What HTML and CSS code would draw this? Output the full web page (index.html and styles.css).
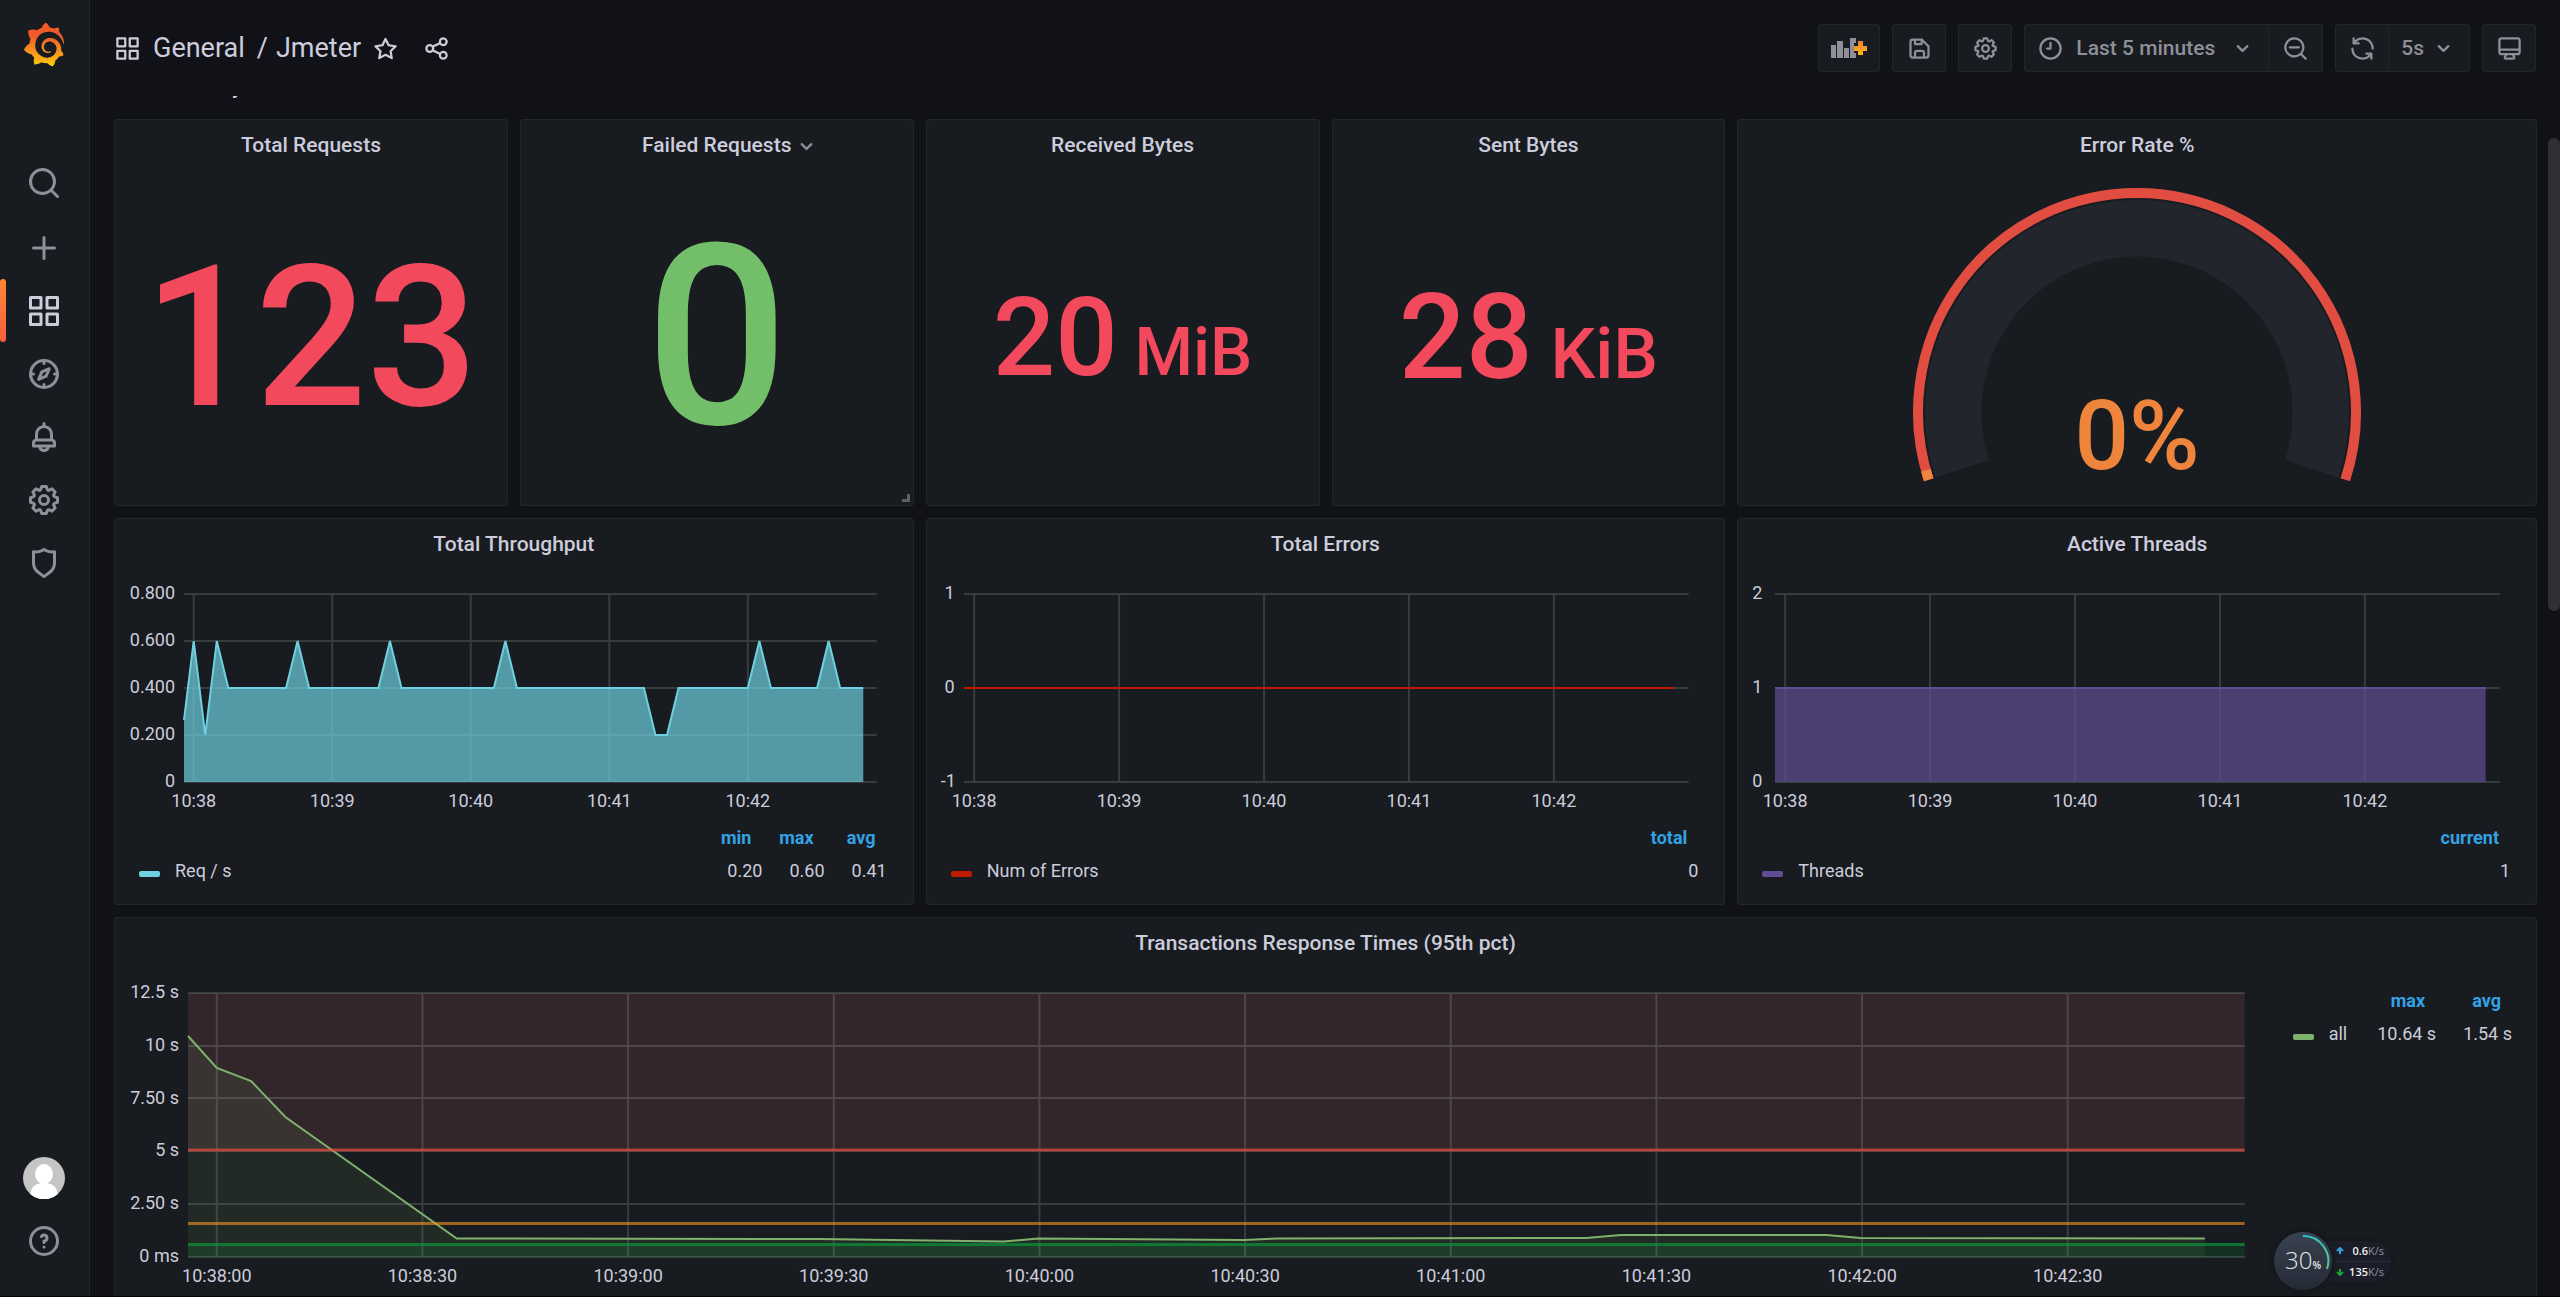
FILE: index.html
```html
<!DOCTYPE html>
<html lang="en">
<head>
<meta charset="utf-8">
<title>Jmeter - Grafana</title>
<link rel="stylesheet" href="styles.css">
</head>
<body>
<svg class="sprite" aria-hidden="true">
  <symbol id="i-search" viewBox="0 0 24 24"><path d="M21.71,20.29,18,16.61A9,9,0,1,0,16.61,18l3.68,3.68a1,1,0,0,0,1.42,0A1,1,0,0,0,21.71,20.29ZM11,18a7,7,0,1,1,7-7A7,7,0,0,1,11,18Z"/></symbol>
  <symbol id="i-plus" viewBox="0 0 24 24"><path d="M19,11H13V5a1,1,0,0,0-2,0v6H5a1,1,0,0,0,0,2h6v6a1,1,0,0,0,2,0V13h6a1,1,0,0,0,0-2Z"/></symbol>
  <symbol id="i-apps" viewBox="0 0 24 24"><path d="M10,13H3a1,1,0,0,0-1,1v7a1,1,0,0,0,1,1h7a1,1,0,0,0,1-1V14A1,1,0,0,0,10,13ZM9,20H4V15H9ZM21,2H14a1,1,0,0,0-1,1v7a1,1,0,0,0,1,1h7a1,1,0,0,0,1-1V3A1,1,0,0,0,21,2ZM20,9H15V4h5Zm1,4H14a1,1,0,0,0-1,1v7a1,1,0,0,0,1,1h7a1,1,0,0,0,1-1V14A1,1,0,0,0,21,13Zm-1,7H15V15h5ZM10,2H3A1,1,0,0,0,2,3v7a1,1,0,0,0,1,1h7a1,1,0,0,0,1-1V3A1,1,0,0,0,10,2ZM9,9H4V4H9Z"/></symbol>
  <symbol id="i-compass" viewBox="0 0 24 24"><path d="M12,2A10,10,0,1,0,22,12,10,10,0,0,0,12,2Zm1,17.93V19a1,1,0,0,0-2,0v.93A8,8,0,0,1,4.07,13H5a1,1,0,0,0,0-2H4.07A8,8,0,0,1,11,4.07V5a1,1,0,0,0,2,0V4.07A8,8,0,0,1,19.93,11H19a1,1,0,0,0,0,2h.93A8,8,0,0,1,13,19.93ZM15.14,7.55l-5,2.12a1,1,0,0,0-.52.52l-2.12,5a1,1,0,0,0,.21,1.1,1,1,0,0,0,.7.3.93.93,0,0,0,.4-.09l5-2.12a1,1,0,0,0,.52-.52l2.12-5a1,1,0,0,0-1.31-1.31Zm-2.49,5.1-2.28,1,1-2.28,2.28-1Z"/></symbol>
  <symbol id="i-bell" viewBox="0 0 24 24"><path d="M18,13.18V10a6,6,0,0,0-5-5.91V3a1,1,0,0,0-2,0V4.09A6,6,0,0,0,6,10v3.18A3,3,0,0,0,4,16v2a1,1,0,0,0,1,1H8.14a4,4,0,0,0,7.72,0H19a1,1,0,0,0,1-1V16A3,3,0,0,0,18,13.18ZM8,10a4,4,0,0,1,8,0v3H8Zm4,10a2,2,0,0,1-1.72-1h3.44A2,2,0,0,1,12,20Zm6-3H6V16a1,1,0,0,1,1-1H17a1,1,0,0,1,1,1Z"/></symbol>
  <symbol id="i-cog" viewBox="0 0 24 24"><path d="M21.32,9.55l-1.89-.63.89-1.78A1,1,0,0,0,20.13,6L18,3.87a1,1,0,0,0-1.15-.19l-1.78.89-.63-1.89A1,1,0,0,0,13.5,2h-3a1,1,0,0,0-.95.68L8.92,4.57,7.14,3.68A1,1,0,0,0,6,3.87L3.87,6a1,1,0,0,0-.19,1.15l.89,1.78-1.89.63A1,1,0,0,0,2,10.5v3a1,1,0,0,0,.68.95l1.89.63-.89,1.78A1,1,0,0,0,3.87,18L6,20.13a1,1,0,0,0,1.15.19l1.78-.89.63,1.89a1,1,0,0,0,.95.68h3a1,1,0,0,0,.95-.68l.63-1.89,1.78.89A1,1,0,0,0,18,20.13L20.13,18a1,1,0,0,0,.19-1.15l-.89-1.78,1.89-.63A1,1,0,0,0,22,13.5v-3A1,1,0,0,0,21.32,9.55ZM20,12.78l-1.2.4A2,2,0,0,0,17.64,16l.57,1.14-1.1,1.1L16,17.64a2,2,0,0,0-2.79,1.16l-.4,1.2H11.22l-.4-1.2A2,2,0,0,0,8,17.64l-1.14.57-1.1-1.1L6.36,16A2,2,0,0,0,5.2,13.18L4,12.78V11.22l1.2-.4A2,2,0,0,0,6.36,8L5.79,6.89l1.1-1.1L8,6.36A2,2,0,0,0,10.82,5.2l.4-1.2h1.56l.4,1.2A2,2,0,0,0,16,6.36l1.14-.57,1.1,1.1L17.64,8a2,2,0,0,0,1.16,2.79l1.2.4ZM12,8a4,4,0,1,0,4,4A4,4,0,0,0,12,8Zm0,6a2,2,0,1,1,2-2A2,2,0,0,1,12,14Z"/></symbol>
  <symbol id="i-shield" viewBox="0 0 24 24"><path d="M19.63,3.65a1,1,0,0,0-.84-.2,8,8,0,0,1-6.22-1.27,1,1,0,0,0-1.14,0A8,8,0,0,1,5.21,3.45a1,1,0,0,0-.84.2A1,1,0,0,0,4,4.43v7.45a9,9,0,0,0,3.77,7.33l3.65,2.6a1,1,0,0,0,1.16,0l3.65-2.6A9,9,0,0,0,20,11.88V4.43A1,1,0,0,0,19.63,3.65ZM18,11.88a7,7,0,0,1-2.93,5.7L12,19.77,8.93,17.58A7,7,0,0,1,6,11.88V5.58a10,10,0,0,0,6-1.39,10,10,0,0,0,6,1.39Z"/></symbol>
  <symbol id="i-help" viewBox="0 0 24 24"><path d="M11.29,15.29a1.58,1.58,0,0,0-.12.15.76.76,0,0,0-.09.18.64.64,0,0,0-.06.18,1.36,1.36,0,0,0,0,.2.84.84,0,0,0,.08.38.9.9,0,0,0,.54.54.94.94,0,0,0,.76,0,.9.9,0,0,0,.54-.54A1,1,0,0,0,13,16a1,1,0,0,0-.29-.71A1,1,0,0,0,11.29,15.29ZM12,2A10,10,0,1,0,22,12,10,10,0,0,0,12,2Zm0,18a8,8,0,1,1,8-8A8,8,0,0,1,12,20ZM12,7A3,3,0,0,0,9.4,8.5a1,1,0,1,0,1.73,1A1,1,0,0,1,12,9a1,1,0,0,1,0,2,1,1,0,0,0-1,1v1a1,1,0,0,0,2,0v-.18A3,3,0,0,0,12,7Z"/></symbol>
  <symbol id="i-star" viewBox="0 0 24 24"><path d="M22,9.67A1,1,0,0,0,21.14,9l-5.69-.83L12.9,3a1,1,0,0,0-1.8,0L8.55,8.16,2.86,9a1,1,0,0,0-.81.68,1,1,0,0,0,.25,1l4.13,4-1,5.68A1,1,0,0,0,6.9,21.44L12,18.77l5.1,2.67a.93.93,0,0,0,.46.12,1,1,0,0,0,.59-.19,1,1,0,0,0,.4-1l-1-5.68,4.13-4A1,1,0,0,0,22,9.67Zm-6.15,4a1,1,0,0,0-.29.88l.72,4.2-3.76-2a1.06,1.06,0,0,0-.94,0l-3.76,2,.72-4.2a1,1,0,0,0-.29-.88l-3-3,4.21-.61a1,1,0,0,0,.76-.55L12,5.7l1.88,3.82a1,1,0,0,0,.76.55l4.21.61Z"/></symbol>
  <symbol id="i-share" viewBox="0 0 24 24"><path d="M18,14a4,4,0,0,0-3.08,1.48l-5.1-2.35a3.64,3.64,0,0,0,0-2.26l5.1-2.35A4,4,0,1,0,14,6a4.17,4.17,0,0,0,.07.71L8.79,9.14a4,4,0,1,0,0,5.72l5.28,2.43A4.17,4.17,0,0,0,14,18a4,4,0,1,0,4-4ZM18,4a2,2,0,1,1-2,2A2,2,0,0,1,18,4ZM6,14a2,2,0,1,1,2-2A2,2,0,0,1,6,14Zm12,6a2,2,0,1,1,2-2A2,2,0,0,1,18,20Z"/></symbol>
  <symbol id="i-save" viewBox="0 0 24 24"><path d="M20.71,9.29l-6-6a1,1,0,0,0-.32-.21A1.09,1.09,0,0,0,14,3H6A3,3,0,0,0,3,6V18a3,3,0,0,0,3,3H18a3,3,0,0,0,3-3V10A1,1,0,0,0,20.71,9.29ZM9,5h4V7H9Zm6,14H9V16a1,1,0,0,1,1-1h4a1,1,0,0,1,1,1Zm4-1a1,1,0,0,1-1,1H17V16a3,3,0,0,0-3-3H10a3,3,0,0,0-3,3v3H6a1,1,0,0,1-1-1V6A1,1,0,0,1,6,5H7V8A1,1,0,0,0,8,9h6a1,1,0,0,0,1-1V6.41l4,4Z"/></symbol>
  <symbol id="i-clock" viewBox="0 0 24 24"><path d="M12,2A10,10,0,1,0,22,12,10,10,0,0,0,12,2Zm0,18a8,8,0,1,1,8-8A8,8,0,0,1,12,20ZM12,6a1,1,0,0,0-1,1v4H9a1,1,0,0,0,0,2h3a1,1,0,0,0,1-1V7A1,1,0,0,0,12,6Z"/></symbol>
  <symbol id="i-angle" viewBox="0 0 24 24"><path d="M17,9.17a1,1,0,0,0-1.41,0L12,12.71,8.46,9.17a1,1,0,0,0-1.41,0,1,1,0,0,0,0,1.42l4.24,4.24a1,1,0,0,0,1.42,0L17,10.59A1,1,0,0,0,17,9.17Z"/></symbol>
  <symbol id="i-zoom-out" viewBox="0 0 24 24"><path d="M21.71,20.29,18,16.61A9,9,0,1,0,16.61,18l3.68,3.68a1,1,0,0,0,1.42,0A1,1,0,0,0,21.71,20.29ZM11,18a7,7,0,1,1,7-7A7,7,0,0,1,11,18Zm4-8H7a1,1,0,0,0,0,2h8a1,1,0,0,0,0-2Z"/></symbol>
  <symbol id="i-sync" viewBox="0 0 24 24"><path d="M19.91,15.51H15.38a1,1,0,0,0,0,2h2.4A8,8,0,0,1,4,12a1,1,0,0,0-2,0,10,10,0,0,0,16.88,7.23V21a1,1,0,0,0,2,0V16.5A1,1,0,0,0,19.91,15.51ZM12,2A10,10,0,0,0,5.12,4.77V3a1,1,0,0,0-2,0V7.5a1,1,0,0,0,1,1h4.5a1,1,0,0,0,0-2H6.22A8,8,0,0,1,20,12a1,1,0,0,0,2,0A10,10,0,0,0,12,2Z"/></symbol>
  <symbol id="i-monitor" viewBox="0 0 24 24"><path d="M19,2H5A3,3,0,0,0,2,5V15a3,3,0,0,0,3,3H7.64l-.58,1a2,2,0,0,0,0,2,2,2,0,0,0,1.75,1h6.46A2,2,0,0,0,17,21a2,2,0,0,0,0-2l-.59-1H19a3,3,0,0,0,3-3V5A3,3,0,0,0,19,2ZM8.77,20,10,18H14l1.2,2ZM20,15a1,1,0,0,1-1,1H5a1,1,0,0,1-1-1V14H20Zm0-3H4V5A1,1,0,0,1,5,4H19a1,1,0,0,1,1,1Z"/></symbol>
  <symbol id="i-grafana" viewBox="0 0 351 365"><path fill="url(#brand)" d="M342,161.2c-0.6-6.1-1.6-13.1-3.6-20.9c-2-7.7-5-16.2-9.4-25c-4.4-8.8-10.1-17.9-17.5-26.8c-2.9-3.5-6.1-6.9-9.5-10.2c5.1-20.3-6.2-37.9-6.2-37.9c-19.5-1.2-31.9,6.1-36.5,9.4c-0.8-0.3-1.5-0.7-2.3-1c-3.3-1.3-6.7-2.6-10.3-3.7c-3.5-1.1-7.1-2.1-10.8-3c-3.7-0.9-7.4-1.6-11.2-2.2c-0.7-0.1-1.3-0.2-2-0.3c-8.5-27.2-32.9-38.6-32.9-38.6c-27.3,17.3-32.4,41.5-32.4,41.5s-0.1,0.5-0.3,1.4c-1.5,0.4-3,0.9-4.5,1.3c-2.1,0.6-4.2,1.4-6.2,2.2c-2.1,0.8-4.1,1.6-6.2,2.5c-4.1,1.8-8.2,3.8-12.2,6c-3.9,2.2-7.7,4.6-11.4,7.1c-0.5-0.2-1-0.4-1-0.4c-37.8-14.4-71.3,2.9-71.3,2.9c-3.1,40.2,15.1,65.5,18.7,70.1c-0.9,2.5-1.7,5-2.5,7.5c-2.8,9.1-4.9,18.4-6.2,28.1c-0.2,1.4-0.4,2.8-0.5,4.2C18.8,192.7,8.5,228,8.5,228c29.1,33.5,63.1,35.6,63.1,35.6c0,0,0.1-0.1,0.1-0.1c4.3,7.7,9.3,15,14.9,21.9c2.4,2.9,4.8,5.6,7.4,8.3c-10.6,30.4,1.5,55.6,1.5,55.6c32.4,1.2,53.7-14.2,58.2-17.7c3.2,1.1,6.5,2.1,9.8,2.9c10,2.6,20.2,4.1,30.4,4.5c2.5,0.1,5.1,0.2,7.6,0.1l1.2,0l0.8,0l1.6,0l1.6-0.1l0,0.1c15.3,21.8,42.1,24.9,42.1,24.9c19.1-20.1,20.2-40.1,20.2-44.4l0,0c0,0,0-0.1,0-0.3c0-0.4,0-0.6,0-0.6l0,0c0-0.3,0-0.6,0-0.9c4-2.8,7.8-5.8,11.4-9.1c7.6-6.9,14.3-14.8,19.9-23.3c0.5-0.8,1-1.6,1.5-2.4c21.6,1.2,36.9-13.4,36.9-13.4c-3.6-22.5-16.4-33.5-19.1-35.6l0,0c0,0-0.1-0.1-0.3-0.2c-0.2-0.1-0.2-0.2-0.2-0.2c0,0,0,0,0,0c-0.1-0.1-0.3-0.2-0.5-0.3c0.1-1.4,0.2-2.7,0.3-4.1c0.2-2.4,0.2-4.9,0.2-7.3l0-1.8l0-0.9l0-0.5c0-0.6,0-0.4,0-0.6l-0.1-1.5l-0.1-2c0-0.7-0.1-1.3-0.2-1.9c-0.1-0.6-0.1-1.3-0.2-1.9l-0.2-1.9l-0.3-1.9c-0.4-2.5-0.8-4.9-1.4-7.4c-2.3-9.7-6.1-18.9-11-27.2c-5-8.3-11.2-15.6-18.3-21.8c-7-6.2-14.9-11.2-23.1-14.9c-8.3-3.7-16.9-6.1-25.5-7.2c-4.3-0.6-8.6-0.8-12.9-0.7l-1.6,0l-0.4,0c-0.1,0-0.6,0-0.5,0l-0.7,0l-1.6,0.1c-0.6,0-1.2,0.1-1.7,0.1c-2.2,0.2-4.4,0.5-6.5,0.9c-8.6,1.6-16.7,4.7-23.8,9c-7.1,4.3-13.3,9.6-18.3,15.6c-5,6-8.9,12.7-11.6,19.6c-2.7,6.9-4.2,14.1-4.6,21c-0.1,1.7-0.1,3.5-0.1,5.2c0,0.4,0,0.9,0,1.3l0.1,1.4c0.1,0.8,0.1,1.7,0.2,2.5c0.3,3.5,1,6.9,1.9,10.1c1.9,6.5,4.9,12.4,8.6,17.4c3.7,5,8.2,9.1,12.9,12.4c4.7,3.2,9.8,5.5,14.8,7c5,1.5,10,2.1,14.7,2.1c0.6,0,1.2,0,1.7,0c0.3,0,0.6,0,0.9,0c0.3,0,0.6,0,0.9-0.1c0.5,0,1-0.1,1.5-0.1c0.1,0,0.3,0,0.4-0.1l0.5-0.1c0.3,0,0.6-0.1,0.9-0.1c0.6-0.1,1.1-0.2,1.7-0.3c0.6-0.1,1.1-0.2,1.6-0.4c1.1-0.2,2.1-0.6,3.1-0.9c2-0.7,4-1.5,5.7-2.4c1.8-0.9,3.4-2,5-3c0.4-0.3,0.9-0.6,1.3-1c1.6-1.3,1.9-3.7,0.6-5.3c-1.1-1.4-3.1-1.8-4.7-0.9c-0.4,0.2-0.8,0.4-1.2,0.6c-1.4,0.7-2.8,1.3-4.3,1.8c-1.5,0.5-3.1,0.9-4.7,1.2c-0.8,0.1-1.6,0.2-2.5,0.3c-0.4,0-0.8,0.1-1.3,0.1c-0.4,0-0.9,0-1.2,0c-0.4,0-0.8,0-1.2,0c-0.5,0-1,0-1.5-0.1c0,0-0.3,0-0.1,0l-0.2,0l-0.3,0c-0.2,0-0.5,0-0.7-0.1c-0.5-0.1-0.9-0.1-1.4-0.2c-3.7-0.5-7.4-1.6-10.9-3.2c-3.6-1.6-7-3.8-10.1-6.6c-3.1-2.8-5.8-6.1-7.9-9.9c-2.1-3.8-3.6-8-4.3-12.4c-0.3-2.2-0.5-4.5-0.4-6.7c0-0.6,0.1-1.2,0.1-1.8c0,0.2,0-0.1,0-0.1l0-0.2l0-0.5c0-0.3,0.1-0.6,0.1-0.9c0.1-1.2,0.3-2.4,0.5-3.6c1.7-9.6,6.5-19,13.9-26.1c1.9-1.8,3.9-3.4,6-4.9c2.1-1.5,4.4-2.8,6.8-3.9c2.4-1.1,4.8-2,7.4-2.7c2.5-0.7,5.1-1.1,7.8-1.4c1.3-0.1,2.6-0.2,4-0.2c0.4,0,0.6,0,0.9,0l1.1,0l0.7,0c0.3,0,0,0,0.1,0l0.3,0l1.1,0.1c2.9,0.2,5.7,0.6,8.5,1.3c5.6,1.2,11.1,3.3,16.2,6.1c10.2,5.7,18.9,14.5,24.2,25.1c2.7,5.3,4.6,11,5.5,16.9c0.2,1.5,0.4,3,0.5,4.5l0.1,1.1l0.1,1.1c0,0.4,0,0.8,0,1.1c0,0.4,0,0.8,0,1.1l0,1l0,1.1c0,0.7-0.1,1.9-0.1,2.6c-0.1,1.6-0.3,3.3-0.5,4.9c-0.2,1.6-0.5,3.2-0.8,4.8c-0.3,1.6-0.7,3.2-1.1,4.7c-0.8,3.1-1.8,6.2-3,9.3c-2.4,6-5.6,11.8-9.4,17.1c-7.7,10.6-18.2,19.2-30.2,24.7c-6,2.7-12.3,4.7-18.8,5.7c-3.2,0.6-6.5,0.9-9.8,1l-0.6,0l-0.5,0l-1.1,0l-1.6,0l-0.8,0c0.4,0-0.1,0-0.1,0l-0.3,0c-1.8,0-3.5-0.1-5.3-0.3c-7-0.5-13.9-1.8-20.7-3.7c-6.7-1.9-13.2-4.6-19.4-7.8c-12.3-6.6-23.4-15.6-32-26.5c-4.3-5.4-8.1-11.3-11.2-17.4c-3.1-6.1-5.6-12.6-7.4-19.1c-1.8-6.6-2.9-13.3-3.4-20.1l-0.1-1.3l0-0.3l0-0.3l0-0.6l0-1.1l0-0.3l0-0.4l0-0.8l0-1.6l0-0.3c0,0,0,0.1,0-0.1l0-0.6c0-0.8,0-1.7,0-2.5c0.1-3.3,0.4-6.8,0.8-10.2c0.4-3.4,1-6.9,1.7-10.3c0.7-3.4,1.5-6.8,2.5-10.2c1.9-6.7,4.3-13.2,7.1-19.3c5.7-12.2,13.1-23.1,22-31.8c2.2-2.2,4.5-4.2,6.9-6.2c2.4-1.9,4.9-3.7,7.5-5.4c2.5-1.7,5.2-3.2,7.9-4.6c1.3-0.7,2.7-1.4,4.1-2c0.7-0.3,1.4-0.6,2.1-0.9c0.7-0.3,1.4-0.6,2.1-0.9c2.8-1.2,5.7-2.2,8.7-3.1c0.7-0.2,1.5-0.4,2.2-0.7c0.7-0.2,1.5-0.4,2.2-0.6c1.5-0.4,3-0.8,4.5-1.1c0.7-0.2,1.5-0.3,2.3-0.5c0.8-0.2,1.5-0.3,2.3-0.5c0.8-0.1,1.5-0.3,2.3-0.4l1.1-0.2l1.2-0.2c0.8-0.1,1.5-0.2,2.3-0.3c0.9-0.1,1.7-0.2,2.6-0.3c0.7-0.1,1.9-0.2,2.6-0.3c0.5-0.1,1.1-0.1,1.6-0.2l1.1-0.1l0.5-0.1l0.6,0c0.9-0.1,1.7-0.1,2.6-0.2l1.3-0.1c0,0,0.5,0,0.1,0l0.3,0l0.6,0c0.7,0,1.5-0.1,2.2-0.1c2.9-0.1,5.9-0.1,8.8,0c5.8,0.2,11.5,0.9,17,1.9c11.1,2.1,21.5,5.6,31,10.3c9.5,4.6,17.9,10.3,25.3,16.5c0.5,0.4,0.9,0.8,1.4,1.2c0.4,0.4,0.9,0.8,1.3,1.2c0.9,0.8,1.7,1.6,2.6,2.4c0.9,0.8,1.7,1.6,2.5,2.4c0.8,0.8,1.6,1.6,2.4,2.5c3.1,3.3,6,6.6,8.6,10c5.2,6.7,9.4,13.5,12.7,19.9c0.2,0.4,0.4,0.8,0.6,1.2c0.2,0.4,0.4,0.8,0.6,1.2c0.4,0.8,0.8,1.6,1.1,2.4c0.4,0.8,0.7,1.5,1.1,2.3c0.3,0.8,0.7,1.5,1,2.3c1.2,3,2.4,5.9,3.3,8.6c1.5,4.4,2.6,8.3,3.5,11.7c0.3,1.4,1.6,2.3,3,2.1c1.5-0.1,2.6-1.3,2.6-2.8C342.6,170.4,342.5,166.1,342,161.2z"/></symbol>
  <defs>
    <linearGradient id="brand" x1="0" y1="1" x2="0" y2="0"><stop offset="0" stop-color="#fcd20a"/><stop offset=".15" stop-color="#fbb117"/><stop offset=".7" stop-color="#f05a28"/><stop offset="1" stop-color="#f05a28"/></linearGradient>
    <linearGradient id="add" x1="0" y1="0" x2="0" y2="1"><stop offset="0" stop-color="#ef7f3a"/><stop offset="1" stop-color="#fbb80f"/></linearGradient>
    <linearGradient id="usage" x1="0" y1="0" x2="0" y2="1"><stop offset="0" stop-color="#2fc8c0"/><stop offset="1" stop-color="#62c283"/></linearGradient>
  </defs>
</svg>

<div class="app">
  <nav class="sidebar" aria-label="Main">
    <a class="logo" href="#" aria-label="Home"><svg><use href="#i-grafana"/></svg></a>
    <a class="side-link search" href="#" aria-label="Search"><svg class="icon-lg"><use href="#i-search"/></svg></a>
    <a class="side-link" href="#" aria-label="Create"><svg class="icon-lg"><use href="#i-plus"/></svg></a>
    <a class="side-link active" href="#" aria-label="Dashboards"><svg class="icon-lg"><use href="#i-apps"/></svg></a>
    <a class="side-link" href="#" aria-label="Explore"><svg class="icon-lg"><use href="#i-compass"/></svg></a>
    <a class="side-link" href="#" aria-label="Alerting"><svg class="icon-lg"><use href="#i-bell"/></svg></a>
    <a class="side-link" href="#" aria-label="Configuration"><svg class="icon-lg"><use href="#i-cog"/></svg></a>
    <a class="side-link" href="#" aria-label="Server admin"><svg class="icon-lg"><use href="#i-shield"/></svg></a>
    <div class="side-bottom">
      <a class="side-link" href="#" aria-label="Profile">
        <svg class="avatar" viewBox="0 0 42 42"><circle cx="21" cy="21" r="21" fill="#c5c5c5"/><ellipse cx="21" cy="17" rx="9" ry="10" fill="#fff"/><path d="M7 37C9 28 14 26 21 26s12 2 14 11A21 21 0 0 1 7 37Z" fill="#fff"/></svg>
      </a>
      <a class="side-link" href="#" aria-label="Help"><svg class="icon-lg"><use href="#i-help"/></svg></a>
    </div>
  </nav>

  <div class="page">
    <header class="topbar">
      <div class="crumbs">
        <svg class="icon"><use href="#i-apps"/></svg>
        <h1 class="crumb-text"><a class="folder" href="#">General</a><span>/</span><a href="#">Jmeter</a></h1>
        <button class="icon-btn" aria-label="Mark as favorite"><svg class="icon"><use href="#i-star"/></svg></button>
        <button class="icon-btn" aria-label="Share dashboard"><svg class="icon"><use href="#i-share"/></svg></button>
      </div>
      <div class="tools">
        <button class="tool" aria-label="Add panel">
          <svg class="add-panel" viewBox="0 0 36 20"><path fill="currentColor" d="M0 7h5v13H0zM6 3h6v17H6zM13 10h5v10h-5zM19 0h6v5h-2v10h2v5h-6z"/><path fill="url(#add)" d="M27 3h5v5h4v5h-4v4h-5v-4h-4V8h4z"/></svg>
        </button>
        <button class="tool" aria-label="Save dashboard"><svg class="icon"><use href="#i-save"/></svg></button>
        <button class="tool" aria-label="Dashboard settings"><svg class="icon"><use href="#i-cog"/></svg></button>
        <div class="tool-group">
          <button class="tool range"><svg class="icon"><use href="#i-clock"/></svg><span>Last 5 minutes</span><svg class="icon"><use href="#i-angle"/></svg></button>
          <button class="tool" aria-label="Zoom out"><svg class="icon"><use href="#i-zoom-out"/></svg></button>
        </div>
        <div class="tool-group">
          <button class="tool" aria-label="Refresh"><svg class="icon"><use href="#i-sync"/></svg></button>
          <button class="tool interval"><span>5s</span><svg class="icon"><use href="#i-angle"/></svg></button>
        </div>
        <button class="tool" aria-label="Cycle view mode"><svg class="icon"><use href="#i-monitor"/></svg></button>
      </div>
    </header>

    <main class="scroller">
      <h2 class="row-title"><svg class="icon"><use href="#i-angle"/></svg>Summary</h2>
      <div class="dashboard">
        <section class="panel w4">
          <h3 class="title">Total Requests</h3>
          <p class="stat red stat-123">123</p>
        </section>
        <section class="panel w4">
          <h3 class="title"><span class="menu-title">Failed Requests<svg class="menu-caret"><use href="#i-angle"/></svg></span></h3>
          <p class="stat green stat-0">0</p>
          <span class="resize"></span>
        </section>
        <section class="panel w4">
          <h3 class="title">Received Bytes</h3>
          <p class="stat red stat-20">20<span class="unit">&nbsp;MiB</span></p>
        </section>
        <section class="panel w4">
          <h3 class="title">Sent Bytes</h3>
          <p class="stat red stat-28">28<span class="unit">&nbsp;KiB</span></p>
        </section>
        <section class="panel w8">
          <h3 class="title">Error Rate %</h3>
          <svg class="gauge" viewBox="0 0 448 296">
            <path d="M15.700 291.700A219 219 0 1 1 432.300 291.700" fill="none" stroke="#e24d42" stroke-width="10"/>
            <path d="M15.700 291.700A219 219 0 0 1 12.900 282.200" fill="none" stroke="#ef843c" stroke-width="10"/>
            <path d="M22.400 289.500A212 212 0 1 1 425.600 289.500L371.900 272.100A155.500 155.500 0 1 0 76.100 272.100Z" fill="#22252b"/>
            <text x="224" y="281" text-anchor="middle">0%</text>
          </svg>
        </section>

        <section class="panel w8">
          <h3 class="title">Total Throughput</h3>
          <div class="chart">
            <div class="y-axis"><span>0.800</span><span>0.600</span><span>0.400</span><span>0.200</span><span>0</span></div>
            <svg class="plot">
              <svg width="100%" height="188" viewBox="0 0 300 188" preserveAspectRatio="none">
                <path class="grid" d="M0 0H300M0 47H300M0 94H300M0 141H300M0 188H300M4.200 0V188M64.200 0V188M124.200 0V188M184.200 0V188M244.200 0V188"/>
                <path fill="#6ed0e0" fill-opacity=".7" d="M0 126L4.200 47L9.200 141L14.200 47L19.200 94H44.200L49.200 47L54.200 94H84.200L89.200 47L94.200 94H134.200L139.200 47L144.200 94H199.200L204.200 141H209.200L214.200 94H244.200L249.200 47L254.200 94H274.200L279.200 47L284.200 94H294.200V188H0Z"/>
                <path class="line" stroke="#6ed0e0" d="M0 126L4.200 47L9.200 141L14.200 47L19.200 94H44.200L49.200 47L54.200 94H84.200L89.200 47L94.200 94H134.200L139.200 47L144.200 94H199.200L204.200 141H209.200L214.200 94H244.200L249.200 47L254.200 94H274.200L279.200 47L284.200 94H294.200"/>
              </svg>
              <text x="1.4%" y="213">10:38</text><text x="21.4%" y="213">10:39</text><text x="41.4%" y="213">10:40</text><text x="61.4%" y="213">10:41</text><text x="81.4%" y="213">10:42</text>
            </svg>
          </div>
          <table class="legend">
            <thead><tr><th class="name"></th><th>min</th><th>max</th><th>avg</th></tr></thead>
            <tbody><tr><td class="name"><i class="swatch cyan"></i>Req / s</td><td>0.20</td><td>0.60</td><td>0.41</td></tr></tbody>
          </table>
        </section>
        <section class="panel w8">
          <h3 class="title">Total Errors</h3>
          <div class="chart">
            <div class="y-axis narrow"><span>1</span><span>0</span><span>-1</span></div>
            <svg class="plot">
              <svg width="100%" height="188" viewBox="0 0 300 188" preserveAspectRatio="none">
                <path class="grid" d="M0 0H300M0 94H300M0 188H300M4.200 0V188M64.200 0V188M124.200 0V188M184.200 0V188M244.200 0V188"/>
                <path class="line" stroke="#bf1b00" d="M0 94H294.200"/>
              </svg>
              <text x="1.4%" y="213">10:38</text><text x="21.4%" y="213">10:39</text><text x="41.4%" y="213">10:40</text><text x="61.4%" y="213">10:41</text><text x="81.4%" y="213">10:42</text>
            </svg>
          </div>
          <table class="legend">
            <thead><tr><th class="name"></th><th>total</th></tr></thead>
            <tbody><tr><td class="name"><i class="swatch crimson"></i>Num of Errors</td><td>0</td></tr></tbody>
          </table>
        </section>
        <section class="panel w8">
          <h3 class="title">Active Threads</h3>
          <div class="chart">
            <div class="y-axis narrow start"><span>2</span><span>1</span><span>0</span></div>
            <svg class="plot">
              <svg width="100%" height="188" viewBox="0 0 300 188" preserveAspectRatio="none">
                <path class="grid" d="M0 0H300M0 94H300M0 188H300M4.200 0V188M64.200 0V188M124.200 0V188M184.200 0V188M244.200 0V188"/>
                <path fill="#614d93" fill-opacity=".7" d="M0 94H294.200V188H0Z"/>
                <path class="line" stroke="#614d93" d="M0 94H294.200"/>
              </svg>
              <text x="1.4%" y="213">10:38</text><text x="21.4%" y="213">10:39</text><text x="41.4%" y="213">10:40</text><text x="61.4%" y="213">10:41</text><text x="81.4%" y="213">10:42</text>
            </svg>
          </div>
          <table class="legend">
            <thead><tr><th class="name"></th><th>current</th></tr></thead>
            <tbody><tr><td class="name"><i class="swatch violet"></i>Threads</td><td>1</td></tr></tbody>
          </table>
        </section>

        <section class="panel w24">
          <h3 class="title">Transactions Response Times (95th pct)</h3>
          <div class="wide">
            <div class="chart">
              <div class="y-axis tall"><span>12.5 s</span><span>10 s</span><span>7.50 s</span><span>5 s</span><span>2.50 s</span><span>0 ms</span></div>
              <svg class="plot tall">
                <svg width="100%" height="264" viewBox="0 0 300 264" preserveAspectRatio="none">
                  <path fill="#f07f82" fill-opacity=".12" d="M0 0H300V158H0Z"/>
                  <path fill="#0a9639" fill-opacity=".17" d="M0 252H300V264H0Z"/>
                  <path class="grid" d="M0 0H300M0 53H300M0 105H300M0 158H300M0 211H300M0 264H300M4.200 0V264M34.200 0V264M64.200 0V264M94.200 0V264M124.200 0V264M154.200 0V264M184.200 0V264M214.200 0V264M244.200 0V264M274.200 0V264"/>
                  <path fill="#7eb26d" fill-opacity=".1" d="M0 43L4.200 75L9.200 88L14.200 124L39.200 245.500L92 246L119 248.500L124 245.500L154 247L159 245.500L204 245L209 242H239L244 245L294.200 245.500V264H0Z"/>
                  <path class="line" stroke="#7eb26d" d="M0 43L4.200 75L9.200 88L14.200 124L39.200 245.500L92 246L119 248.500L124 245.500L154 247L159 245.500L204 245L209 242H239L244 245L294.200 245.500"/>
                  <path class="limit" stroke="#f04c3e" stroke-opacity=".65" d="M0 157H300"/>
                  <path class="limit" stroke="#f79520" stroke-opacity=".6" d="M0 230.500H300"/>
                  <path class="limit" stroke="#0a9639" stroke-opacity=".7" d="M0 251.500H300"/>
                </svg>
                <text x="1.4%" y="289">10:38:00</text><text x="11.4%" y="289">10:38:30</text><text x="21.4%" y="289">10:39:00</text><text x="31.4%" y="289">10:39:30</text><text x="41.4%" y="289">10:40:00</text><text x="51.4%" y="289">10:40:30</text><text x="61.4%" y="289">10:41:00</text><text x="71.4%" y="289">10:41:30</text><text x="81.4%" y="289">10:42:00</text><text x="91.4%" y="289">10:42:30</text>
              </svg>
            </div>
            <table class="legend side">
              <thead><tr><th class="name"></th><th>max</th><th>avg</th></tr></thead>
              <tbody><tr><td class="name"><i class="swatch olive"></i>all</td><td>10.64 s</td><td>1.54 s</td></tr></tbody>
            </table>
          </div>
        </section>
      </div>
    </main>
  </div>
  <div class="thumb"></div>

  <aside class="monitor" aria-label="Network monitor">
    <div class="dial">
      <svg class="dial-arc" viewBox="0 0 58 58"><path d="M29 4A25 25 0 0 1 53 37" fill="none" stroke="url(#usage)" stroke-width="2"/></svg>
      <span>30</span><small>%</small>
    </div>
    <div class="rates">
      <div class="rate"><svg class="arrow up" viewBox="0 0 8 8"><path d="M4 1v6M1 4l3-3 3 3"/></svg><b>0.6</b><span>K/s</span></div>
      <div class="rate"><svg class="arrow down" viewBox="0 0 8 8"><path d="M4 1v6M1 4l3 3 3-3"/></svg><b>135</b><span>K/s</span></div>
    </div>
  </aside>
</div>
</body>
</html>
```
FILE: styles.css
```css
:root {
  --canvas: #111217;
  --surface: #181b1f;
  --line: #23262b;
  --text: #ccccdc;
  --muted: #8f8f9a;
}

* { box-sizing: border-box; }

body {
  margin: 0;
  background: var(--canvas);
  color: var(--text);
  font: 18px/24px Roboto, "Liberation Sans", sans-serif;
}

h1, h2, h3, p { margin: 0; font-weight: 400; }
a { color: inherit; text-decoration: none; }
button { margin: 0; font: inherit; color: inherit; cursor: pointer; }
svg { fill: currentColor; display: block; flex: none; }

.sprite { position: absolute; width: 0; height: 0; }
.icon { width: 27px; height: 27px; }
.icon-lg { width: 36px; height: 36px; }

.app {
  position: relative;
  display: flex;
  height: 100vh;
  overflow: hidden;
  border-bottom: 1px solid #000;
}

/* Sidebar */
.sidebar {
  flex: none;
  width: 90px;
  padding-right: 1px;
  display: flex;
  flex-direction: column;
  background: var(--surface);
  border-right: 1px solid var(--line);
  color: var(--muted);
}
.logo { padding: 22px 0 0 23px; height: 151px; }
.logo svg { width: 42px; height: 45px; }
.side-link {
  position: relative;
  display: flex;
  align-items: center;
  justify-content: center;
  height: 63px;
}
.search { margin-bottom: 2px; }
.active { color: var(--text); }
.active::before {
  content: "";
  position: absolute;
  left: 0;
  top: 0;
  width: 6px;
  height: 63px;
  border-radius: 3px;
  background: linear-gradient(#ff8833, #f55f3e);
}
.side-bottom { margin-top: auto; padding-bottom: 24px; }
.avatar { width: 42px; height: 42px; }

/* Top bar */
.page { flex: 1; min-width: 0; display: flex; flex-direction: column; }
.topbar {
  flex: none;
  height: 96px;
  padding: 0 24px;
  display: flex;
  align-items: center;
  justify-content: space-between;
}
.crumbs { display: flex; align-items: center; }
.crumb-text {
  display: flex;
  gap: 8px;
  margin: 0 11px 0 12px;
  font-size: 27px;
  line-height: 36px;
}
.folder { padding-right: 4px; }
.icon-btn {
  display: flex;
  padding: 0;
  margin-right: 24px;
  border: 0;
  background: none;
}
.tools { display: flex; gap: 12px; color: var(--muted); font-size: 21px; font-weight: 500; }
.tool-group { display: flex; }
.tool {
  height: 48px;
  min-width: 54px;
  padding: 0 12px;
  display: flex;
  align-items: center;
  justify-content: center;
  background: var(--surface);
  border: 1px solid var(--line);
  border-radius: 3px;
}
.tool-group .tool:first-child { border-radius: 3px 0 0 3px; }
.tool-group .tool:last-child { border-radius: 0 3px 3px 0; border-left: 0; }
.add-panel { width: 36px; height: 20px; }
.range span { margin: 0 14px 0 12px; }
.interval span { margin-right: 6px; }

/* Dashboard grid */
.scroller { flex: 1; min-height: 0; overflow: hidden; padding: 0 23px 0 24px; }
.row-title {
  display: flex;
  align-items: center;
  margin: -26px 0 19px;
  font-size: 24px;
  line-height: 30px;
}
.dashboard {
  display: grid;
  grid-template-columns: repeat(24, minmax(0, 1fr));
  grid-auto-rows: 387px;
  gap: 12px;
}
.w4 { grid-column: span 4; }
.w8 { grid-column: span 8; }
.w24 { grid-column: span 24; }
.panel {
  position: relative;
  display: flex;
  flex-direction: column;
  background: var(--surface);
  border: 1px solid var(--line);
  border-radius: 3px;
}
.title {
  flex: none;
  text-align: center;
  font-size: 21px;
  font-weight: 500;
  line-height: 50px;
}
.menu-title { position: relative; }
.menu-caret {
  position: absolute;
  left: 100%;
  top: 0;
  width: 27px;
  height: 27px;
  margin-left: 2px;
  color: var(--muted);
}
.resize {
  position: absolute;
  right: 3px;
  bottom: 3px;
  width: 8px;
  height: 8px;
  border: solid #5c5f63;
  border-width: 0 3px 3px 0;
}

.stat {
  flex: 1;
  display: flex;
  flex-wrap: wrap;
  align-items: baseline;
  align-content: center;
  justify-content: center;
  font-weight: 500;
  line-height: 1;
}
.red { color: #f2495c; }
.green { color: #73bf69; }
.stat-123 { font-size: 196px; }
.stat-0 { font-size: 252px; }
.stat-20 { font-size: 110px; }
.stat-20 .unit { font-size: 67px; }
.stat-28 { font-size: 118px; }
.stat-28 .unit { font-size: 71px; }

.gauge { width: 448px; height: 296px; margin: 18px auto 0; overflow: visible; }
.gauge text { font-size: 96px; font-weight: 500; fill: #ef843c; }

/* Graphs */
.chart { display: flex; padding: 25px 36px 0 14px; }
.y-axis {
  flex: none;
  width: 46px;
  height: 208px;
  margin: -11px 9px 0 0;
  display: flex;
  flex-direction: column;
  justify-content: space-between;
  text-align: right;
  line-height: 20px;
  white-space: nowrap;
}
.y-axis.narrow { width: 14px; }
.y-axis.start { text-align: left; }
.y-axis.tall { width: 50px; height: 284px; }
.plot { flex: 1; min-width: 0; height: 188px; overflow: visible; }
.plot.tall { height: 264px; }
.plot svg { overflow: visible; }
.plot text { text-anchor: middle; font-size: 18px; }
.grid { fill: none; stroke: #c8d0d0; stroke-opacity: .18; stroke-width: 2; vector-effect: non-scaling-stroke; }
.line { fill: none; stroke-width: 2; vector-effect: non-scaling-stroke; }
.limit { fill: none; stroke-width: 3; vector-effect: non-scaling-stroke; }

.legend {
  margin: 30px 26px 0 24px;
  border-collapse: collapse;
  line-height: 33px;
  white-space: nowrap;
}
.legend th { padding: 0 11px 0 10px; text-align: right; font-weight: 700; color: #33a2e5; }
.legend td { padding: 0 0 0 27px; text-align: right; }
.legend .name { width: 100%; padding: 0; text-align: left; }
.legend.side .name { padding-right: 3px; }
.swatch {
  display: inline-block;
  width: 21px;
  height: 6px;
  margin-right: 15px;
  border-radius: 2px;
}
.cyan { background: #6ed0e0; }
.crimson { background: #bf1b00; }
.violet { background: #614d93; }
.olive { background: #7eb26d; }

.wide { display: flex; align-items: flex-start; }
.wide .chart { flex: 1; padding-right: 48px; }
.legend.side { flex: none; margin: 16px 24px 0 0; }

.thumb {
  position: absolute;
  right: 0;
  top: 138px;
  width: 12px;
  height: 473px;
  border-radius: 6px;
  background: #2e3036;
}

/* Floating network monitor */
.monitor {
  position: absolute;
  right: 169px;
  bottom: 6px;
  display: flex;
  align-items: center;
  font-family: "Open Sans", "Noto Sans", sans-serif;
}
.dial {
  position: relative;
  z-index: 1;
  width: 58px;
  height: 58px;
  display: flex;
  align-items: baseline;
  justify-content: center;
  border-radius: 50%;
  background: linear-gradient(#3a4150, #252a37);
  box-shadow: 0 0 6px #101217;
  color: #e6e6e6;
  font-size: 24px;
  font-weight: 300;
  line-height: 56px;
}
.dial small { font-size: 10px; font-weight: 600; }
.dial-arc { position: absolute; left: 0; top: 0; width: 58px; height: 58px; }
.rates {
  width: 87px;
  margin-left: -28px;
  padding-left: 32px;
  border-radius: 20px;
  background: #1b1e28;
  box-shadow: 0 0 4px #14161b;
  font-size: 11px;
  line-height: 20px;
}
.rate { display: flex; align-items: center; padding-right: 7px; }
.rate + .rate { border-top: 1px solid #282c35; }
.rate b { margin-left: auto; font-weight: 600; color: #f0f0f0; }
.rate span { font-weight: 400; color: #8f929b; }
.arrow { width: 8px; height: 8px; fill: none; stroke-width: 2; }
.up { stroke: #2ea3e0; }
.down { stroke: #1ea133; }
```
